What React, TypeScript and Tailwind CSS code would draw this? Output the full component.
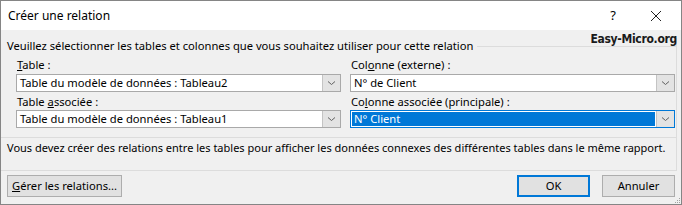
import { ReactNode } from "react";

function Chevron() {
  return (
    <svg width="9" height="6" viewBox="0 0 9 6" fill="none">
      <path d="M1 1.5 L4.5 4.5 L8 1.5" stroke="#606060" strokeWidth="1" />
    </svg>
  );
}

function Combo({ value, active = false }: { value: string; active?: boolean }) {
  return (
    <div
      className={`h-[18px] flex bg-white border ${
        active ? "border-[#0078d7]" : "border-[#a9a9a9]"
      }`}
    >
      <div className="flex-1 flex items-center pl-[1px] pr-[1px]">
        <span
          className={`flex-1 h-[14px] leading-[14px] pl-[2px] ${
            active ? "bg-[#0078d7] text-white" : ""
          }`}
        >
          {value}
        </span>
      </div>
      <div className="w-[18px] bg-[#e3e3e3] border-l border-[#c4c4c4] flex items-center justify-center">
        <Chevron />
      </div>
    </div>
  );
}

function Label({ children, className = "" }: { children: ReactNode; className?: string }) {
  return <div className={`h-[16px] leading-[16px] pl-[1px] ${className}`}>{children}</div>;
}

function Button({ children, primary = false, className = "" }: { children: ReactNode; primary?: boolean; className?: string }) {
  return (
    <button
      className={`h-[22px] bg-[#e1e1e1] flex items-center justify-center ${
        primary ? "border-2 border-[#0078d7]" : "border border-[#adadad]"
      } ${className}`}
    >
      {children}
    </button>
  );
}

export default function App() {
  return (
    <div className="w-[682px] h-[205px] border border-[#858585] bg-[#f0f0f0] flex flex-col text-[11.2px] text-black whitespace-nowrap font-['Segoe_UI','Noto_Sans',sans-serif]">
      {/* Title bar */}
      <div className="h-[29px] bg-white flex items-center pl-[7px] shrink-0">
        <span className="text-[12px]">Créer une relation</span>
        <span className="ml-auto mr-[34px] text-[13px]">?</span>
        <svg width="12" height="12" viewBox="0 0 12 12" className="mr-[19px]">
          <path d="M1 1 L11 11 M11 1 L1 11" stroke="#222" strokeWidth="1" />
        </svg>
      </div>

      {/* Body */}
      <div className="relative flex-1 flex flex-col">
        <div className="absolute right-[4px] top-[0px] text-[12px] font-bold tracking-[-0.3px] text-[#1a1a1a] font-['DejaVu_Sans_Condensed','DejaVu_Sans',sans-serif]">
          Easy-Micro.org
        </div>

        {/* Group box */}
        <div className="mt-[8px] mr-[4px] border-r border-b border-[#dcdcdc]">
          <div className="flex items-center h-[16px] pl-[6px]">
            <span>Veuillez sélectionner les tables et colonnes que vous souhaitez utiliser pour cette relation</span>
            <div className="flex-1 ml-[4px] border-t border-[#dcdcdc]" />
          </div>
          <div className="grid grid-cols-2 gap-x-[9px] pl-[15px] pr-[1px] pt-[3px] pb-[9px]">
            <div>
              <Label>
                <u>T</u>able :
              </Label>
              <div className="mt-[1px]">
                <Combo value="Table du modèle de données : Tableau2" />
              </div>
              <Label className="mt-[2px]">
                Table <u>a</u>ssociée :
              </Label>
              <Combo value="Table du modèle de données : Tableau1" />
            </div>
            <div>
              <Label>
                Col<u>o</u>nne (externe) :
              </Label>
              <div className="mt-[1px]">
                <Combo value="N° de Client" />
              </div>
              <Label className="mt-[2px]">
                Co<u>l</u>onne associée (principale) :
              </Label>
              <Combo value="N° Client" active />
            </div>
          </div>
        </div>

        {/* Info */}
        <div className="mr-[4px] border-r border-b border-[#dcdcdc] h-[33px] pl-[6px] pt-[2px] leading-[16px] text-[11px]">
          Vous devez créer des relations entre les tables pour afficher les données connexes des différentes tables dans le même rapport.
        </div>

        {/* Buttons */}
        <div className="flex items-center pl-[6px] pr-[6px] pt-[4px]">
          <Button className="w-[115px]">
            <span>
              <u>G</u>érer les relations...
            </span>
          </Button>
          <Button primary className="w-[73px] ml-auto">
            OK
          </Button>
          <Button className="w-[73px] ml-[12px]">Annuler</Button>
        </div>

        {/* resize grip */}
        <div className="absolute right-[1px] bottom-[1px] grid grid-cols-3 gap-[1px]">
          <span className="w-[1px] h-[1px]" />
          <span className="w-[1px] h-[1px]" />
          <span className="w-[1px] h-[1px] bg-[#a0a0a0]" />
          <span className="w-[1px] h-[1px]" />
          <span className="w-[1px] h-[1px] bg-[#a0a0a0]" />
          <span className="w-[1px] h-[1px] bg-[#a0a0a0]" />
          <span className="w-[1px] h-[1px] bg-[#a0a0a0]" />
          <span className="w-[1px] h-[1px] bg-[#a0a0a0]" />
          <span className="w-[1px] h-[1px] bg-[#a0a0a0]" />
        </div>
      </div>
    </div>
  );
}
